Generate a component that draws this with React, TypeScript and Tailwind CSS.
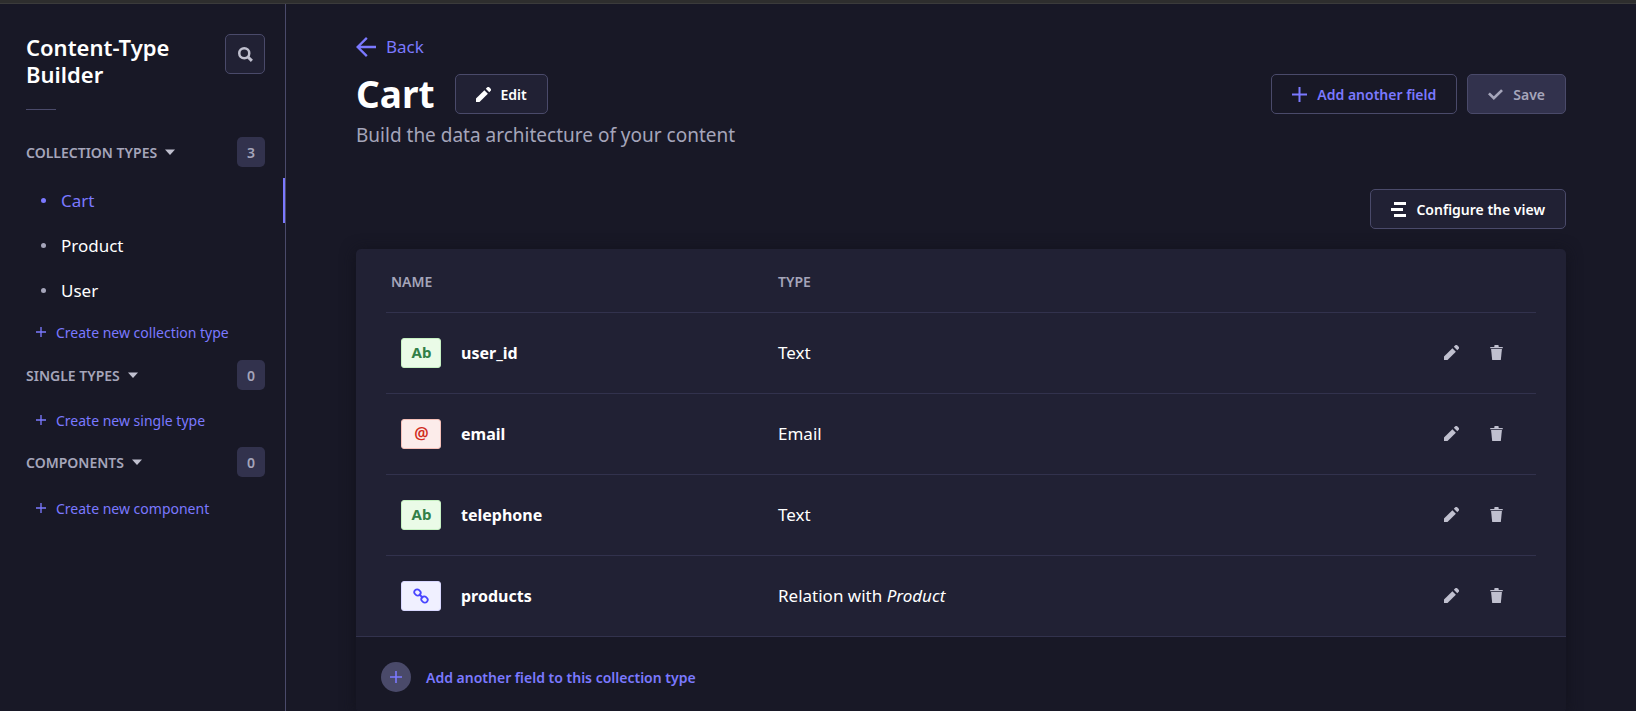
import type { ReactNode } from 'react';

type IconProps = { className?: string };

const PencilIcon = ({ className }: IconProps) => (
  <svg viewBox="0 0 24 24" fill="currentColor" className={className} aria-hidden="true">
    <path d="M0 24v-5.6L13.400 5l5.600 5.600L5.600 24H0Z" />
    <path d="M15.700 2.800 17.600.900a2.800 2.800 0 0 1 4 0l1.500 1.500a2.800 2.800 0 0 1 0 4l-1.900 1.900-5.500-5.500Z" />
  </svg>
);

const TrashIcon = ({ className }: IconProps) => (
  <svg viewBox="0 0 24 24" fill="currentColor" className={className} aria-hidden="true">
    <path d="M2 3.2h6.5V1.5c0-.8.6-1.5 1.5-1.5h4c.9 0 1.5.7 1.5 1.5v1.7H22V5H2V3.2Z" />
    <path d="M3.3 6.4h17.4L18.9 24H5.1L3.3 6.4Z" />
  </svg>
);

const PlusIcon = ({ className }: IconProps) => (
  <svg viewBox="0 0 24 24" fill="currentColor" className={className} aria-hidden="true">
    <path d="M24 13.6H13.6V24h-3.2V13.6H0v-3.2h10.4V0h3.2v10.4H24v3.2Z" />
  </svg>
);

const CheckIcon = ({ className }: IconProps) => (
  <svg viewBox="0 0 24 24" fill="currentColor" className={className} aria-hidden="true">
    <path d="M20.9 3.4 24 6.2 9.3 20.6 0 11.7l3-2.9 6.3 5.8L20.9 3.4Z" />
  </svg>
);

const SearchIcon = ({ className }: IconProps) => (
  <svg viewBox="0 0 24 24" fill="none" stroke="currentColor" className={className} aria-hidden="true">
    <circle cx="10" cy="10" r="8" strokeWidth="4" />
    <path d="m16 16 6.2 6.2" strokeWidth="4.8" />
  </svg>
);

const BackIcon = ({ className }: IconProps) => (
  <svg viewBox="0 0 24 24" fill="none" stroke="currentColor" strokeWidth="2.8" className={className} aria-hidden="true">
    <path d="M24 12H2.5M13 1 2 12l11 11" />
  </svg>
);

const LayerIcon = ({ className }: IconProps) => (
  <svg viewBox="0 0 15 15" fill="currentColor" className={className} aria-hidden="true">
    <path d="M3 0h12v3H3zM0 6h12v3H0zM3 12h12v3H3z" />
  </svg>
);

const CaretIcon = ({ className }: IconProps) => (
  <svg viewBox="0 0 10 6" fill="currentColor" className={className} aria-hidden="true">
    <path d="M0 .5h10L5 6z" />
  </svg>
);

const LinkIcon = ({ className }: IconProps) => (
  <svg viewBox="0 0 16 16" fill="none" stroke="currentColor" strokeWidth="1.8" className={className} aria-hidden="true">
    <rect x="-3.3" y="-2.8" width="6.6" height="5.6" rx="2.8" transform="translate(4.5 4.5) rotate(45)" />
    <rect x="-3.3" y="-2.8" width="6.6" height="5.6" rx="2.8" transform="translate(11.5 11.5) rotate(45)" />
    <path d="m6 6 4 4" />
  </svg>
);

const TextBadge = () => (
  <span className="flex h-[30px] w-10 items-center justify-center rounded-[3px] border border-[#c6f0c2] bg-[#eafbe7] pl-px text-[15px] font-bold text-[#328048]">
    Ab
  </span>
);

const EmailBadge = () => (
  <span className="flex h-[30px] w-10 items-center justify-center rounded-[3px] border border-[#f5c0b8] bg-[#fcecea] pb-px pl-px text-[16px] font-semibold text-[#d02b20]">
    @
  </span>
);

const RelationBadge = () => (
  <span className="flex h-[30px] w-10 items-center justify-center rounded-[3px] border border-[#d9d8ff] bg-[#f0f0ff] text-[#4945ff]">
    <LinkIcon className="size-4" />
  </span>
);

type Field = { name: string; badge: ReactNode; type: ReactNode };

const fields: Field[] = [
  { name: 'user_id', badge: <TextBadge />, type: 'Text' },
  { name: 'email', badge: <EmailBadge />, type: 'Email' },
  { name: 'telephone', badge: <TextBadge />, type: 'Text' },
  { name: 'products', badge: <RelationBadge />, type: <>Relation with <em>Product</em></> },
];

const collectionTypes = [
  { name: 'Cart', active: true },
  { name: 'Product', active: false },
  { name: 'User', active: false },
];

function SectionHeader({ label, count }: { label: string; count: number }) {
  return (
    <div className="flex h-[30px] items-center justify-between pr-5 pl-[26px]">
      <button type="button" className="flex items-center gap-2 text-[14px] font-semibold text-[#a5a5ba] uppercase">
        {label}
        <CaretIcon className="h-[6px] w-[10px] text-[#c0c0cf]" />
      </button>
      <span className="flex h-[30px] min-w-7 items-center justify-center rounded-[5px] bg-[#32324d] px-[10px] text-[14px] font-semibold text-[#a5a5ba]">
        {count}
      </span>
    </div>
  );
}

function CreateLink({ label }: { label: string }) {
  return (
    <a href="#create" className="flex h-5 items-center gap-[10px] pl-9 text-[14px] text-[#7b79ff]">
      <PlusIcon className="size-[10px]" />
      {label}
    </a>
  );
}

function Sidebar() {
  return (
    <aside className="w-[286px] shrink-0 border-r border-[#4a4a6a]">
      <div className="flex items-start justify-between pt-[30px] pr-5 pl-[26px]">
        <h2 className="text-[22px] leading-[27px] font-semibold">
          Content-Type
          <br />
          Builder
        </h2>
        <button
          type="button"
          aria-label="Search"
          className="flex size-10 items-center justify-center rounded-[5px] border border-[#4a4a6a] bg-[#212134] text-[#c0c0cf]"
        >
          <SearchIcon className="size-[15px]" />
        </button>
      </div>
      <hr className="mt-[21px] ml-[26px] w-[30px] border-[#4a4a6a]" />
      <nav className="pt-[27px]">
        <SectionHeader label="Collection Types" count={3} />
        <ul className="pt-[11px]">
          {collectionTypes.map(({ name, active }) => (
            <li key={name}>
              <a
                href={`#${name}`}
                className={
                  active
                    ? 'flex h-[45px] items-center gap-[15px] border-r-2 border-[#7b79ff] pl-[41px] text-[17px] text-[#7b79ff]'
                    : 'flex h-[45px] items-center gap-[15px] pl-[41px] text-[17px]'
                }
              >
                <span className={active ? 'size-[5px] rounded-full bg-[#7b79ff]' : 'size-[5px] rounded-full bg-[#a5a5ba]'} />
                {name}
              </a>
            </li>
          ))}
        </ul>
        <div className="pt-[9px] pb-[18px]">
          <CreateLink label="Create new collection type" />
        </div>
        <SectionHeader label="Single Types" count={0} />
        <div className="pt-5 pb-[17px]">
          <CreateLink label="Create new single type" />
        </div>
        <SectionHeader label="Components" count={0} />
        <div className="pt-[21px]">
          <CreateLink label="Create new component" />
        </div>
      </nav>
    </aside>
  );
}

const buttonBase = 'flex h-10 items-center gap-[10px] rounded-[5px] border border-[#4a4a6a] px-5 text-[14px] font-semibold';

function FieldsTable() {
  return (
    <section className="mt-5 overflow-hidden rounded-[5px] bg-[#212134] shadow-[0_2px_15px_#12121c]">
      <div className="px-[30px]">
        <table className="w-full table-fixed text-left">
          <colgroup>
            <col className="w-[34%]" />
            <col />
            <col className="w-[110px]" />
          </colgroup>
          <thead>
            <tr className="h-[63px] text-[14px] text-[#a5a5ba]">
              <th className="pt-[2px] pl-[5px] font-semibold">NAME</th>
              <th className="pt-[2px] pl-px font-semibold">TYPE</th>
              <th aria-label="Actions" />
            </tr>
          </thead>
          <tbody>
            {fields.map(({ name, badge, type }) => (
              <tr key={name} className="h-[81px] border-t border-[#32324d] text-[17px]">
                <td className="pl-[15px]">
                  <div className="flex items-center gap-5">
                    {badge}
                    <span className="text-[16px] font-bold">{name}</span>
                  </div>
                </td>
                <td className="pl-px">{type}</td>
                <td>
                  <div className="flex items-center gap-[30px] pl-[18px] text-[#c0c0cf]">
                    <button type="button" aria-label={`Edit ${name}`}>
                      <PencilIcon className="size-[15px]" />
                    </button>
                    <button type="button" aria-label={`Delete ${name}`}>
                      <TrashIcon className="size-[15px]" />
                    </button>
                  </div>
                </td>
              </tr>
            ))}
          </tbody>
        </table>
      </div>
      <button
        type="button"
        className="flex w-full items-center gap-[15px] border-t border-[#32324d] bg-[#181826] px-[25px] pt-[25px] pb-5 text-[14px] font-semibold text-[#7b79ff]"
      >
        <span className="flex size-[30px] items-center justify-center rounded-full bg-[#4a4a6a]">
          <PlusIcon className="size-3" />
        </span>
        Add another field to this collection type
      </button>
    </section>
  );
}

export default function App() {
  return (
    <div className='flex min-h-screen flex-col bg-[#181826] font-["Noto_Sans",sans-serif] text-white'>
      <div className="h-1 border-b border-[#3b3b3b] bg-[#2e2e2e]" />
      <div className="flex grow">
        <Sidebar />
        <main className="min-w-0 grow px-[70px] pt-[31px]">
          <a href="#back" className="flex h-6 w-fit items-center gap-[10px] text-[17px] text-[#7b79ff]">
            <BackIcon className="size-5" />
            Back
          </a>
          <header className="flex items-center justify-between pt-[15px]">
            <div className="flex items-center gap-5">
              <h1 className="text-[37px] leading-10 font-bold">Cart</h1>
              <button type="button" className={`${buttonBase} bg-[#212134]`}>
                <PencilIcon className="size-[15px]" />
                Edit
              </button>
            </div>
            <div className="flex gap-[10px]">
              <button type="button" className={`${buttonBase} text-[#7b79ff]`}>
                <PlusIcon className="size-[15px]" />
                Add another field
              </button>
              <button type="button" disabled className={`${buttonBase} bg-[#32324d] text-[#a5a5ba]`}>
                <CheckIcon className="size-[15px]" />
                Save
              </button>
            </div>
          </header>
          <p className="pt-2 text-[19px] leading-[26px] text-[#a5a5ba]">Build the data architecture of your content</p>
          <div className="flex justify-end pt-[41px]">
            <button type="button" className={`${buttonBase} bg-[#212134]`}>
              <LayerIcon className="size-[15px]" />
              Configure the view
            </button>
          </div>
          <FieldsTable />
        </main>
      </div>
    </div>
  );
}
